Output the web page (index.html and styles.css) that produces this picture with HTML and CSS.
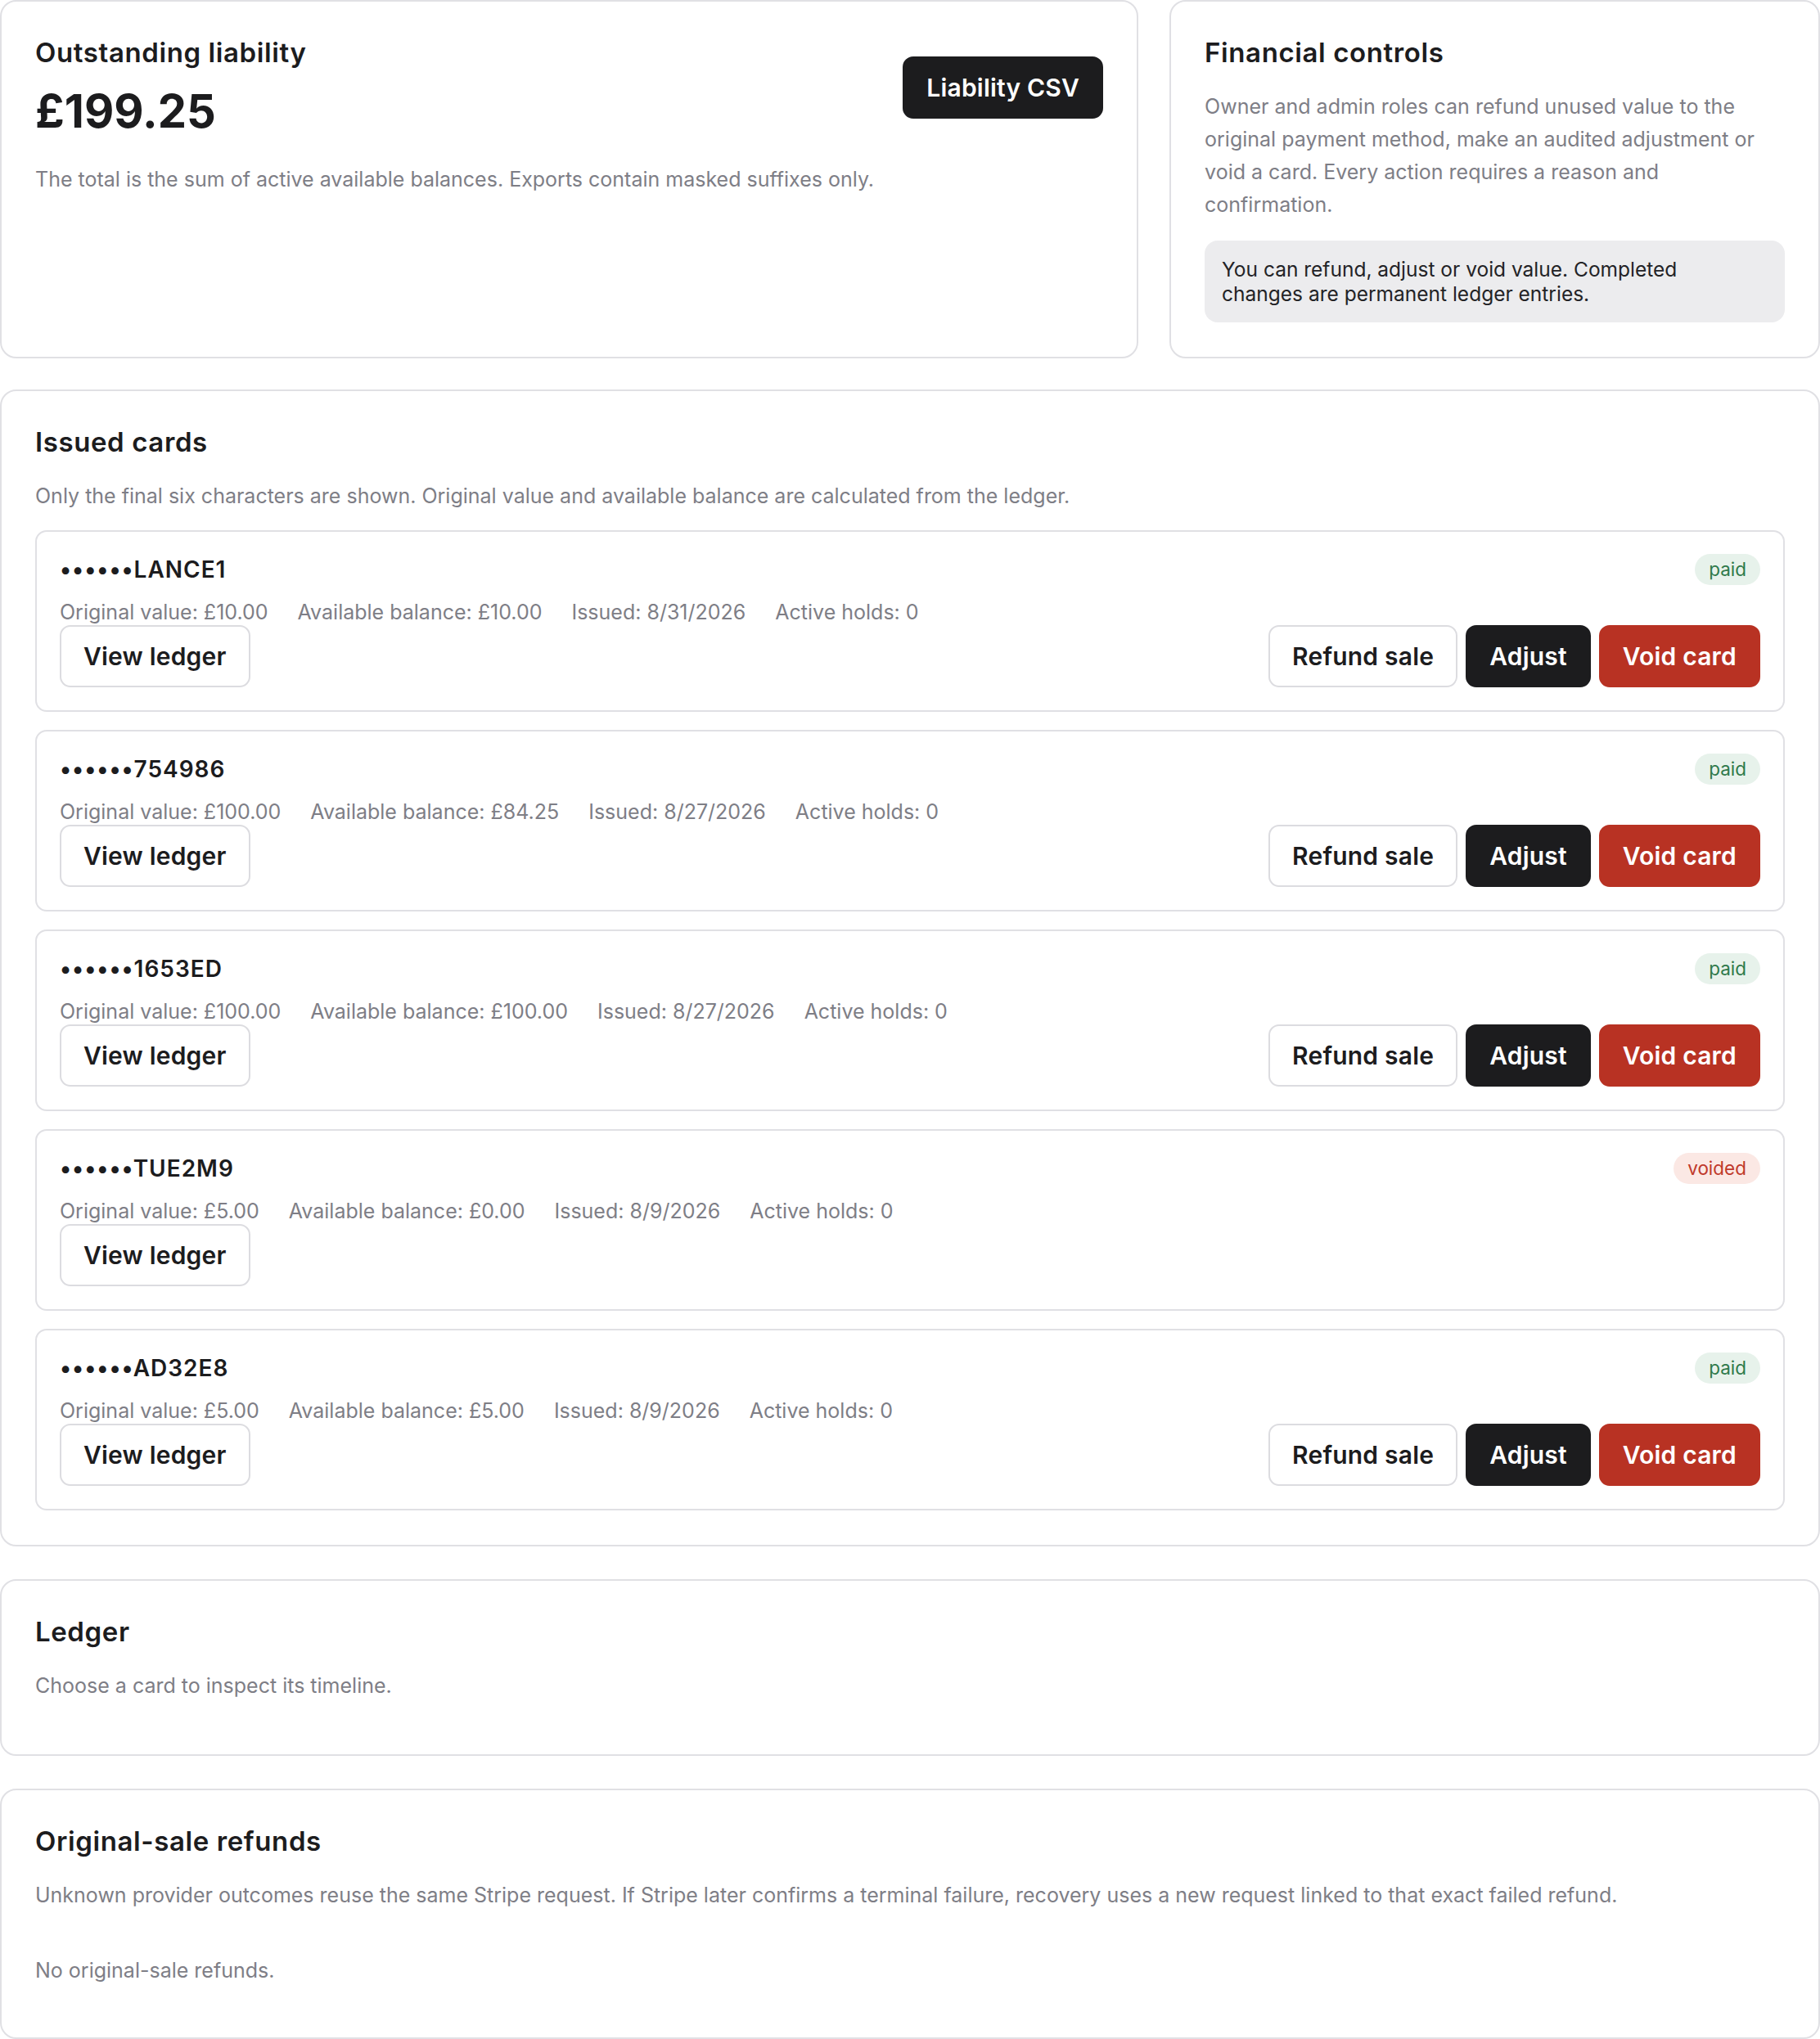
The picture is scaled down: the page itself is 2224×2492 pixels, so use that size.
FILE: index.html
```html
<!DOCTYPE html>
<html lang="en">
<head>
    <meta charset="UTF-8">
    <meta name="viewport" content="width=device-width, initial-scale=1.0">
    <title>Gift cards</title>
    <link rel="stylesheet" href="styles.css">
</head>
<body>
    <div class="top-row">
        <section class="panel">
            <div class="liability-head">
                <div>
                    <h2>Outstanding liability</h2>
                    <div class="amount">£199.25</div>
                </div>
                <button class="btn btn-dark">Liability CSV</button>
            </div>
            <p class="muted liability-note">The total is the sum of active available balances. Exports contain masked suffixes only.</p>
        </section>

        <section class="panel">
            <h2>Financial controls</h2>
            <p class="muted lead">Owner and admin roles can refund unused value to the original payment method, make an audited adjustment or void a card. Every action requires a reason and confirmation.</p>
            <div class="notice">You can refund, adjust or void value. Completed changes are permanent ledger entries.</div>
        </section>
    </div>

    <section class="panel">
        <h2>Issued cards</h2>
        <p class="muted lead">Only the final six characters are shown. Original value and available balance are calculated from the ledger.</p>

        <div class="card-list">
            <div class="gift-card">
                <div class="gift-head">
                    <span class="code">••••••LANCE1</span>
                    <span class="badge badge-paid">paid</span>
                </div>
                <div class="meta">
                    <span>Original value: £10.00</span>
                    <span>Available balance: £10.00</span>
                    <span>Issued: 8/31/2026</span>
                    <span>Active holds: 0</span>
                </div>
                <div class="gift-actions">
                    <button class="btn">View ledger</button>
                    <div class="btn-group">
                        <button class="btn">Refund sale</button>
                        <button class="btn btn-dark">Adjust</button>
                        <button class="btn btn-danger">Void card</button>
                    </div>
                </div>
            </div>

            <div class="gift-card">
                <div class="gift-head">
                    <span class="code">••••••754986</span>
                    <span class="badge badge-paid">paid</span>
                </div>
                <div class="meta">
                    <span>Original value: £100.00</span>
                    <span>Available balance: £84.25</span>
                    <span>Issued: 8/27/2026</span>
                    <span>Active holds: 0</span>
                </div>
                <div class="gift-actions">
                    <button class="btn">View ledger</button>
                    <div class="btn-group">
                        <button class="btn">Refund sale</button>
                        <button class="btn btn-dark">Adjust</button>
                        <button class="btn btn-danger">Void card</button>
                    </div>
                </div>
            </div>

            <div class="gift-card">
                <div class="gift-head">
                    <span class="code">••••••1653ED</span>
                    <span class="badge badge-paid">paid</span>
                </div>
                <div class="meta">
                    <span>Original value: £100.00</span>
                    <span>Available balance: £100.00</span>
                    <span>Issued: 8/27/2026</span>
                    <span>Active holds: 0</span>
                </div>
                <div class="gift-actions">
                    <button class="btn">View ledger</button>
                    <div class="btn-group">
                        <button class="btn">Refund sale</button>
                        <button class="btn btn-dark">Adjust</button>
                        <button class="btn btn-danger">Void card</button>
                    </div>
                </div>
            </div>

            <div class="gift-card">
                <div class="gift-head">
                    <span class="code">••••••TUE2M9</span>
                    <span class="badge badge-voided">voided</span>
                </div>
                <div class="meta">
                    <span>Original value: £5.00</span>
                    <span>Available balance: £0.00</span>
                    <span>Issued: 8/9/2026</span>
                    <span>Active holds: 0</span>
                </div>
                <div class="gift-actions">
                    <button class="btn">View ledger</button>
                </div>
            </div>

            <div class="gift-card">
                <div class="gift-head">
                    <span class="code">••••••AD32E8</span>
                    <span class="badge badge-paid">paid</span>
                </div>
                <div class="meta">
                    <span>Original value: £5.00</span>
                    <span>Available balance: £5.00</span>
                    <span>Issued: 8/9/2026</span>
                    <span>Active holds: 0</span>
                </div>
                <div class="gift-actions">
                    <button class="btn">View ledger</button>
                    <div class="btn-group">
                        <button class="btn">Refund sale</button>
                        <button class="btn btn-dark">Adjust</button>
                        <button class="btn btn-danger">Void card</button>
                    </div>
                </div>
            </div>
        </div>
    </section>

    <section class="panel">
        <h2>Ledger</h2>
        <p class="muted lead">Choose a card to inspect its timeline.</p>
    </section>

    <section class="panel">
        <h2>Original-sale refunds</h2>
        <p class="muted lead">Unknown provider outcomes reuse the same Stripe request. If Stripe later confirms a terminal failure, recovery uses a new request linked to that exact failed refund.</p>
        <p class="muted empty">No original-sale refunds.</p>
    </section>
</body>
</html>
```

FILE: styles.css
```css
body {
    font-family: Inter, 'Noto Sans', sans-serif;
    color: #1c1c1e;
    margin: 0;
    background-color: #fff;
}
h2 {
    font-size: 33px;
    line-height: 40px;
    font-weight: 600;
    margin: 0;
    letter-spacing: 0.6px;
}
p {
    margin: 0;
}
.muted {
    color: #7e7e86;
    font-size: 25px;
    line-height: 40px;
}
.top-row {
    display: grid;
    grid-template-columns: 7fr 4fr;
    gap: 38px;
    margin-bottom: 38px;
}
.panel {
    border: 2px solid #e0e0e4;
    border-radius: 20px;
    padding: 42px 41px;
    margin-bottom: 40px;
    background-color: #fff;
}
.top-row .panel {
    margin-bottom: 0;
}
.liability-head {
    display: flex;
    justify-content: space-between;
    align-items: center;
}
.amount {
    font-size: 56px;
    line-height: 68px;
    font-weight: 700;
    margin-top: 18px;
}
.liability-note {
    margin-top: 29px;
}
.lead {
    margin-top: 26px;
    margin-bottom: 22px;
}
.notice {
    background-color: #ececee;
    border-radius: 16px;
    padding: 20px 40px 20px 21px;
    font-size: 24.5px;
    line-height: 30px;
    color: #232326;
    margin-top: 24px;
}
.card-list {
    display: flex;
    flex-direction: column;
    gap: 22px;
}
.lead + .card-list {
    margin-top: 6px;
}
.gift-card {
    border: 2px solid #e0e0e4;
    border-radius: 14px;
    padding: 27px 28px 28px;
}
.gift-head {
    display: flex;
    justify-content: space-between;
    align-items: center;
}
.code {
    font-size: 28px;
    font-weight: 600;
    letter-spacing: 1px;
}
.badge {
    font-size: 22.5px;
    line-height: 30px;
    padding: 4px 17px;
    border-radius: 999px;
}
.badge-paid {
    background-color: #e7f2eb;
    color: #2f7a4b;
}
.badge-voided {
    background-color: #fbe8e4;
    color: #c0392b;
}
.meta {
    display: flex;
    gap: 36px;
    color: #7e7e86;
    font-size: 25px;
    line-height: 32px;
    margin-top: 17px;
}
.gift-actions {
    display: flex;
    justify-content: space-between;
    align-items: center;
}
.btn-group {
    display: flex;
    gap: 10px;
}
.btn {
    font-family: inherit;
    font-size: 30px;
    line-height: 36px;
    font-weight: 600;
    letter-spacing: 0.2px;
    color: #1c1c1e;
    background-color: #fff;
    border: 2px solid #dcdce0;
    border-radius: 13px;
    padding: 18px 27px;
    cursor: pointer;
}
.btn-dark {
    background-color: #1c1c1e;
    border-color: #1c1c1e;
    color: #fff;
}
.btn-danger {
    background-color: #b83223;
    border-color: #b83223;
    color: #fff;
}
.empty {
    margin-top: 52px;
    margin-bottom: 20px;
}
```
